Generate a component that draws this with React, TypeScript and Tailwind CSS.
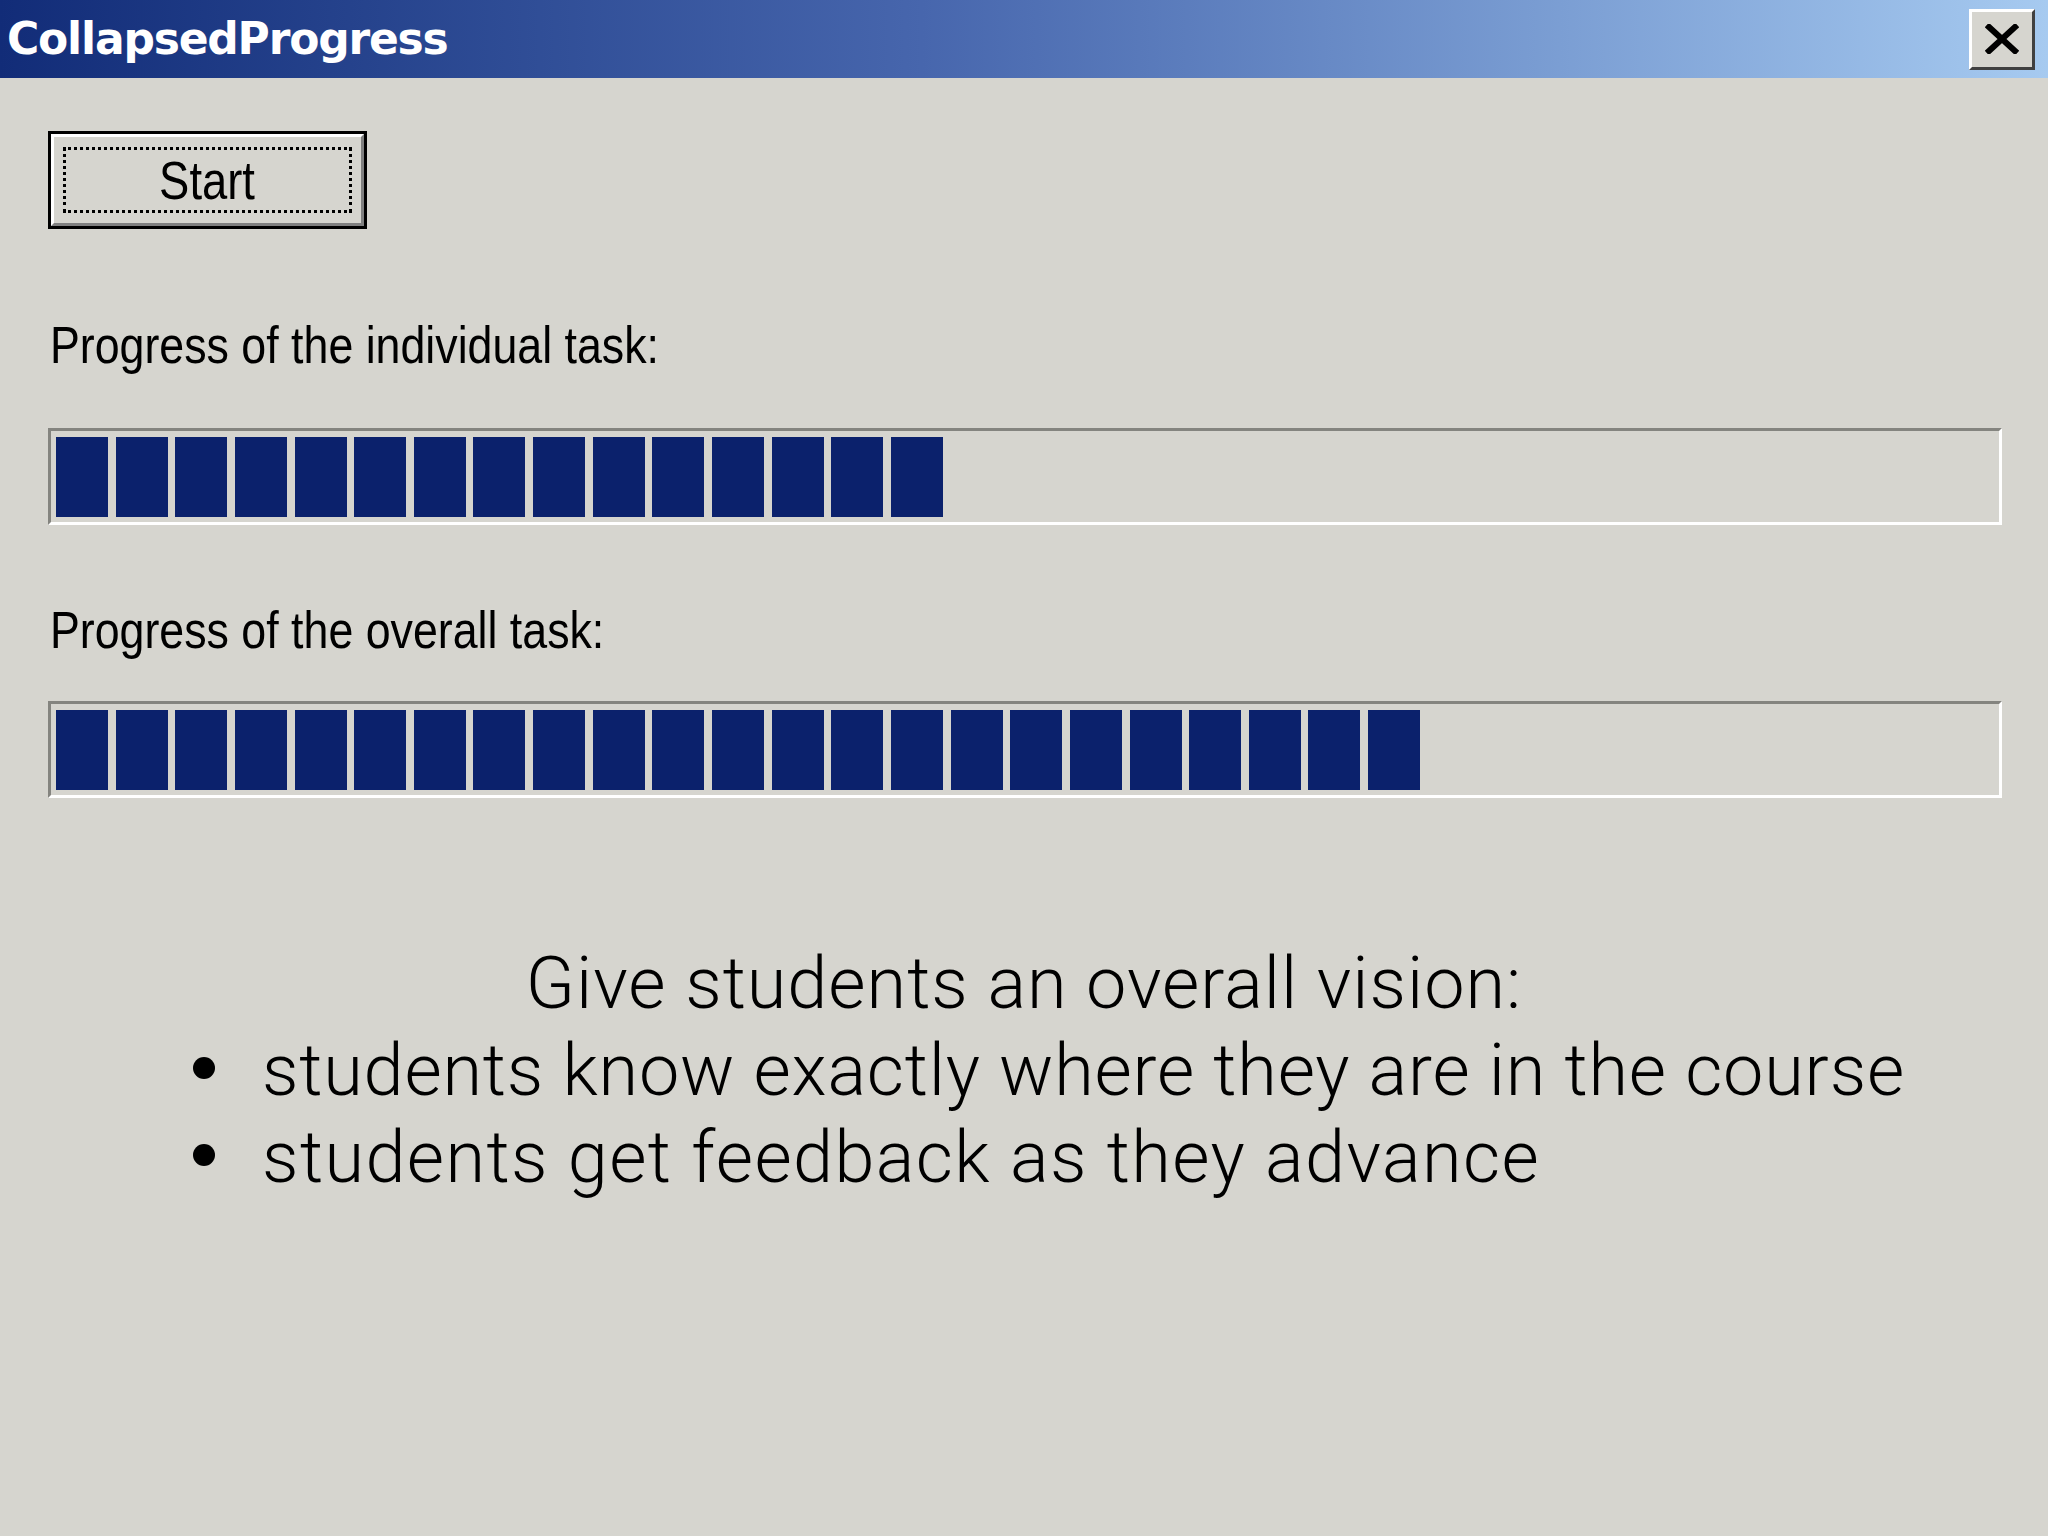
import React from "react";

function Bar({ n }: { n: number }) {
  return (
    <div className="ml-[48px] w-[1954px] h-[97px] border-[3px] border-t-[#84847f] border-l-[#84847f] border-r-white border-b-white flex gap-[7.65px] pl-[5px] pt-[6px] pb-[5px]">
      {Array.from({ length: n }).map((_, i) => (
        <div key={i} className="w-[52px] h-full bg-[#0b216c]" />
      ))}
    </div>
  );
}

function Label({ children }: { children: React.ReactNode }) {
  return (
    <div className="ml-[50px] h-[52px] text-[52px] leading-[52px] font-['Liberation_Sans',sans-serif] text-black whitespace-nowrap">
      <span className="inline-block origin-left scale-x-[0.86]">{children}</span>
    </div>
  );
}

export default function App() {
  return (
    <div className="w-[2048px] h-[1536px] bg-[#d6d5cf] overflow-hidden flex flex-col">
      <div className="h-[78px] shrink-0 flex items-center justify-between pl-[7px] pr-[13px] bg-linear-to-r from-[#122c78] via-[#4766ad] via-45% to-[#a6caf0]">
        <div className="text-white font-['DejaVu_Sans',sans-serif] font-bold text-[44px] leading-none tracking-[-1.2px]">
          CollapsedProgress
        </div>
        <div className="w-[66px] h-[61px] bg-[#d6d5cf] border-[3px] border-t-white border-l-white border-r-[#404040] border-b-[#404040] flex items-center justify-center">
          <svg width="34" height="30" viewBox="0 0 34 30">
            <path d="M4 3 L30 27 M30 3 L4 27" stroke="#000" strokeWidth="6" strokeLinecap="square" fill="none" />
          </svg>
        </div>
      </div>

      <div className="ml-[48px] mt-[53px] w-[319px] h-[98px] border-[3px] border-black">
        <div className="w-full h-full border-[3px] border-t-white border-l-white border-r-[#808080] border-b-[#808080] px-[9px] py-[10px]">
          <div className="w-full h-full border-[3px] border-dotted border-black flex items-center justify-center">
            <span className="inline-block scale-x-[0.84] text-[54px] leading-none font-['Liberation_Sans',sans-serif] text-black">
              Start
            </span>
          </div>
        </div>
      </div>

      <div className="mt-[90px]">
        <Label>Progress of the individual task:</Label>
      </div>
      <div className="mt-[57px]">
        <Bar n={15} />
      </div>
      <div className="mt-[79px]">
        <Label>Progress of the overall task:</Label>
      </div>
      <div className="mt-[45px]">
        <Bar n={23} />
      </div>

      <div className="mt-[142px] font-['Roboto',sans-serif] font-light text-[72px] leading-[87px] text-black">
        <div className="text-center tracking-[1px]">Give students an overall vision:</div>
        <div className="flex pl-[193px]">
          <div className="w-[69px] shrink-0 pt-[30px]">
            <div className="w-[22px] h-[22px] rounded-full bg-black" />
          </div>
          <div className="whitespace-nowrap tracking-[0.8px]">students know exactly where they are in the course</div>
        </div>
        <div className="flex pl-[193px]">
          <div className="w-[69px] shrink-0 pt-[30px]">
            <div className="w-[22px] h-[22px] rounded-full bg-black" />
          </div>
          <div className="whitespace-nowrap tracking-[1.4px]">students get feedback as they advance</div>
        </div>
      </div>
    </div>
  );
}
